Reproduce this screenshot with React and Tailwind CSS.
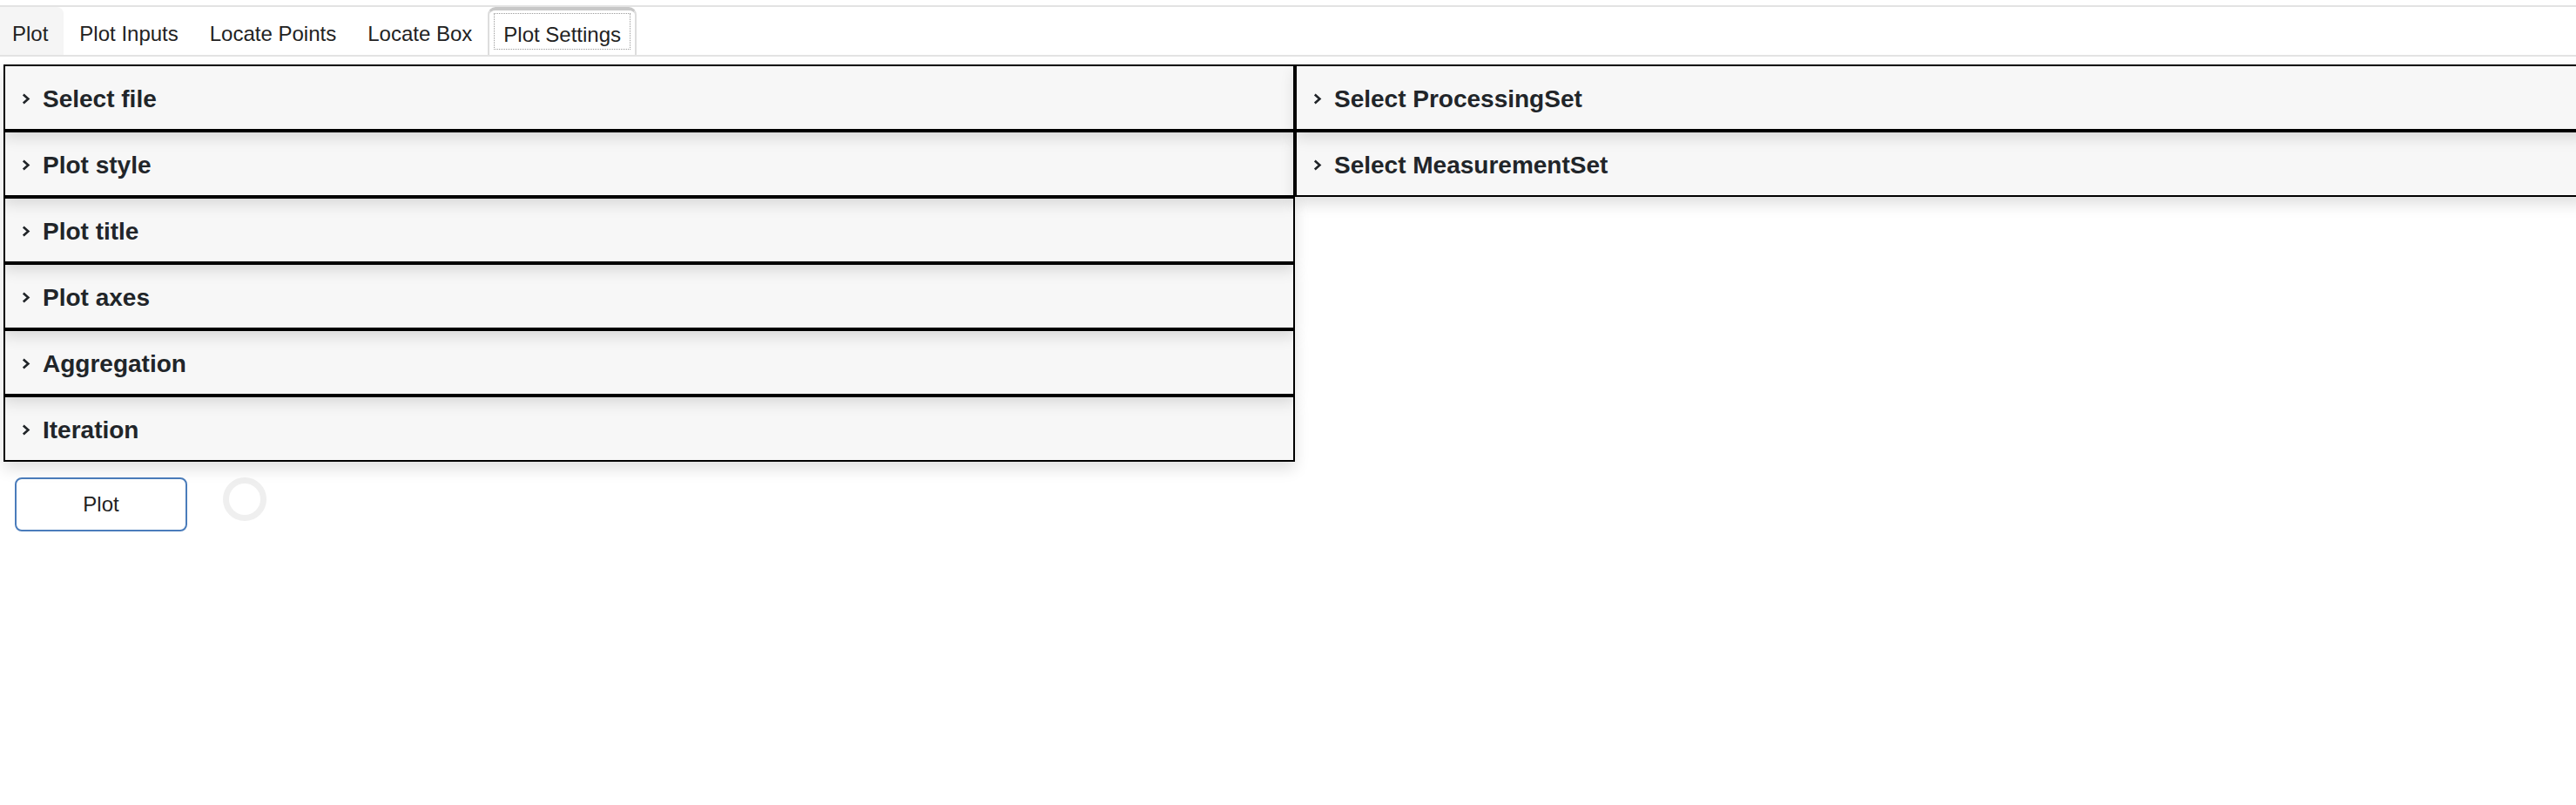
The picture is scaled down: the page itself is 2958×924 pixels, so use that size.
import React from 'react'

const tabs = [
  { label: 'Plot', cls: 'pl-[14px] pr-[18px] bg-[#f5f5f5] rounded-tr-[8px]' },
  { label: 'Plot Inputs', cls: 'px-[18px]' },
  { label: 'Locate Points', cls: 'px-[18px]' },
  { label: 'Locate Box', cls: 'px-[18px]' },
]

const leftItems = [
  { title: 'Select file', z: 'z-[6]' },
  { title: 'Plot style', z: 'z-[5]' },
  { title: 'Plot title', z: 'z-[4]' },
  { title: 'Plot axes', z: 'z-[3]' },
  { title: 'Aggregation', z: 'z-[2]' },
  { title: 'Iteration', z: 'z-[1]' },
]

const rightItems = [
  { title: 'Select ProcessingSet', z: 'z-[6]' },
  { title: 'Select MeasurementSet', z: 'z-[5]' },
]

const Chevron = () => (
  <svg width="10" height="13" viewBox="0 0 10 13" className="shrink-0">
    <path d="M1.8 1.5 L7.4 6.5 L1.8 11.5" fill="none" stroke="#212529" strokeWidth="2.6" strokeLinecap="butt" strokeLinejoin="miter" />
  </svg>
)

const AccordionItem = ({ title, z }) => {
  return (
    <div className={`relative ${z} h-[76px] border-2 border-black bg-[#f7f7f7] shadow-[0_8px_16px_rgba(0,0,0,0.13)]`}>
      <button className="flex items-center w-full h-full pl-[19px] pt-[3px] text-left">
        <Chevron />
        <span className="ml-[14px] text-[28px] font-bold text-[#212529] leading-none">{title}</span>
      </button>
    </div>
  )
}

export default function App() {
  return (
    <div className="w-[2958px] h-[924px] overflow-hidden bg-white font-['Liberation_Sans',Arial,sans-serif] text-[#222]">
      <div className="mt-[6px] h-[59px] border-t-2 border-b-2 border-[#e3e3e3] flex items-stretch">
        {tabs.map(tab => (
          <div key={tab.label} className={`h-[55px] pt-[17px] text-[24px] leading-[27px] whitespace-nowrap ${tab.cls}`}>
            {tab.label}
          </div>
        ))}
        <div className="h-[55px] bg-white border-t-4 border-x-2 border-t-[#c8c8c8] border-x-[#dddddd] rounded-t-[9px] px-[5px] pt-[3px] pb-[6px]">
          <div className="h-full border border-dotted border-[#9a9a9a] px-[10px] pt-[10px] text-[24px] leading-[27px] whitespace-nowrap">
            Plot Settings
          </div>
        </div>
      </div>

      <div className="mt-[9px] pl-[4px] flex items-start">
        <div className="w-[1483px] shrink-0 flex flex-col isolate">
          {leftItems.map(item => (
            <AccordionItem key={item.title} title={item.title} z={item.z} />
          ))}
        </div>
        <div className="w-[1483px] shrink-0 flex flex-col isolate">
          {rightItems.map(item => (
            <AccordionItem key={item.title} title={item.title} z={item.z} />
          ))}
        </div>
      </div>

      <div className="mt-[18px] pl-[17px] flex items-start gap-[41px]">
        <button className="w-[198px] h-[62px] border-2 border-[#4a7cbb] rounded-[8px] bg-white text-[24px] text-[#222]">
          Plot
        </button>
        <div className="w-[50px] h-[50px] rounded-full border-[7px] border-[#efefef]"></div>
      </div>
    </div>
  )
}
